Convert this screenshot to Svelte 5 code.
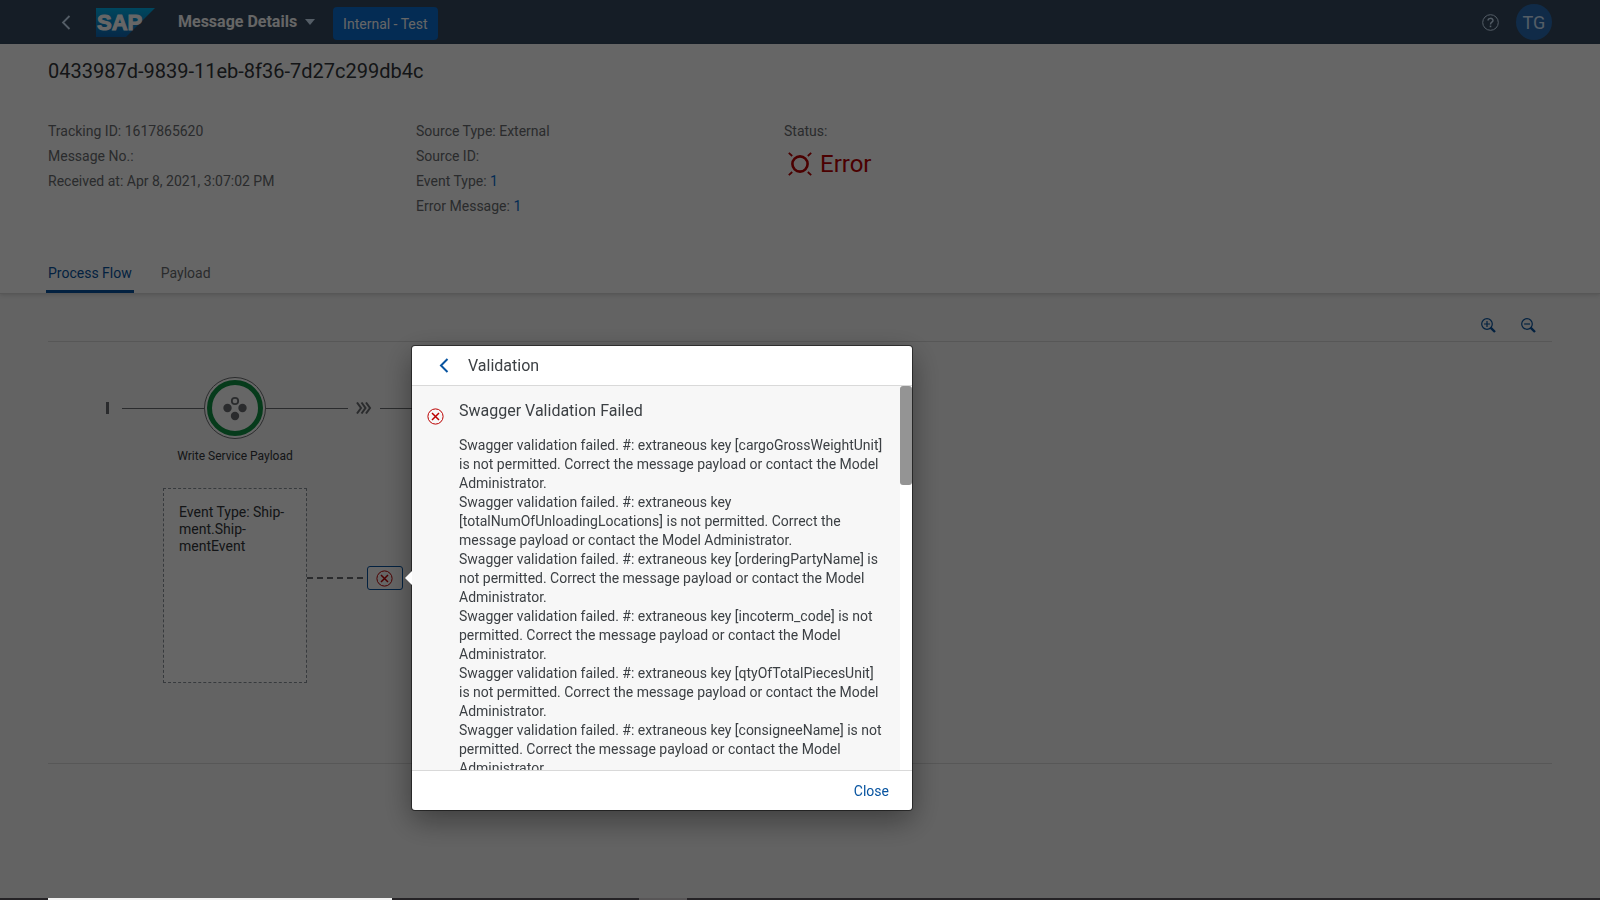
<script>
  const keys = [
    'cargoGrossWeightUnit',
    'totalNumOfUnloadingLocations',
    'orderingPartyName',
    'incoterm_code',
    'qtyOfTotalPiecesUnit',
    'consigneeName'
  ];
</script>

{#snippet errorIcon()}
  <svg class="error-icon" viewBox="0 0 17 17" width="17" height="17" aria-hidden="true">
    <circle cx="8.5" cy="8.5" r="7.6" fill="none" stroke="currentColor" stroke-width="1" />
    <path d="M5 5l7 7M12 5l-7 7" fill="none" stroke="currentColor" stroke-width="1.5" />
  </svg>
{/snippet}

<div class="page">
  <header class="shell">
    <button class="plain back" aria-label="Back">
      <svg viewBox="0 0 10 15" width="10" height="15"><path d="M8.5 1L2 7.5 8.5 14" fill="none" stroke="#d1e8ff" stroke-width="1.8" /></svg>
    </button>
    <svg class="logo" viewBox="0 0 59 29" width="59" height="29" role="img" aria-label="SAP">
      <defs>
        <linearGradient id="sap" x1="0" y1="0" x2="0" y2="1">
          <stop offset="0" stop-color="#00b1eb" />
          <stop offset="1" stop-color="#1065b3" />
        </linearGradient>
      </defs>
      <path d="M0 0H59L30 29H0z" fill="url(#sap)" />
      <text x="1" y="22" class="logo-text">SAP</text>
    </svg>
    <button class="plain app-title">
      Message Details
      <svg viewBox="0 0 10 6" width="10" height="6"><path d="M0 0h10L5 6z" fill="#d1e8ff" /></svg>
    </button>
    <button class="plain env">Internal - Test</button>
    <span class="spacer"></span>
    <button class="plain help" aria-label="Help">
      <svg viewBox="0 0 17 17" width="17" height="17" fill="none" stroke="#d1e8ff">
        <circle cx="8.5" cy="8.5" r="7.8" />
        <path d="M6 6.6C6 3.6 11 3.6 11 6.4 11 8.3 8.5 8.1 8.5 10.4" stroke-width="1.4" />
        <path d="M8.5 11.6v1.6" stroke-width="1.6" />
      </svg>
    </button>
    <button class="plain avatar">TG</button>
  </header>

  <section class="object">
    <h1>0433987d-9839-11eb-8f36-7d27c299db4c</h1>
    <div class="meta">
      <div>
        <p>Tracking ID: 1617865620</p>
        <p>Message No.:</p>
        <p>Received at: Apr 8, 2021, 3:07:02 PM</p>
      </div>
      <div>
        <p>Source Type: External</p>
        <p>Source ID:</p>
        <p>Event Type: <a href="#event">1</a></p>
        <p>Error Message: <a href="#error">1</a></p>
      </div>
      <div>
        <p>Status:</p>
        <div class="status">
          <svg viewBox="0 0 24 24" width="24" height="24" fill="none" stroke="currentColor">
            <circle cx="12" cy="12" r="7.6" stroke-width="2.6" />
            <path d="M.8 .8l3.4 3.2M23.2 .8l-3.4 3.2M.8 23.2l3.4-3.2M23.2 23.2l-3.4-3.2" stroke-width="1.8" />
          </svg>
          Error
        </div>
      </div>
    </div>
    <nav class="tabs">
      <button class="plain tab active">Process Flow</button>
      <button class="plain tab">Payload</button>
    </nav>
  </section>

  <main>
    <div class="toolbar">
      <button class="plain zoom" aria-label="Zoom in">
        <svg viewBox="0 0 15 15" width="15" height="15" fill="none" stroke="currentColor">
          <circle cx="6" cy="6" r="5.3" stroke-width="1.2" /><path d="M3 6h6M6 3v6" stroke-width="1.2" /><path d="M9.6 9.6l4.4 4.4" stroke-width="2.4" />
        </svg>
      </button>
      <button class="plain zoom" aria-label="Zoom out">
        <svg viewBox="0 0 15 15" width="15" height="15" fill="none" stroke="currentColor">
          <circle cx="6" cy="6" r="5.3" stroke-width="1.2" /><path d="M3 6h6" stroke-width="1.2" /><path d="M9.6 9.6l4.4 4.4" stroke-width="2.4" />
        </svg>
      </button>
    </div>

    <div class="canvas">
      <div class="lane">
        <span class="start"></span>
        <span class="line"></span>
        <svg class="node" viewBox="0 0 62 62" width="62" height="62" aria-hidden="true">
          <circle cx="31" cy="31" r="30.5" fill="#fff" stroke="#6a6d70" />
          <circle cx="31" cy="31" r="25.5" fill="#fff" stroke="#109445" stroke-width="5" />
          <circle cx="31" cy="24" r="3.2" fill="none" stroke="#6a6d70" stroke-width="1.8" />
          <g fill="#6a6d70"><circle cx="23.5" cy="31" r="4.2" /><circle cx="38.5" cy="31" r="4.2" /><circle cx="31" cy="39" r="4.2" /></g>
        </svg>
        <span class="line"></span>
        <svg class="chevrons" viewBox="0 0 16 12" width="16" height="12" fill="none" stroke="#6a6d70" stroke-width="2" aria-hidden="true">
          <path d="M1 .5L5 6 1 11.5M5.5 .5l4 5.5-4 5.5M10 .5L14 6l-4 5.5" />
        </svg>
        <span class="line"></span>
      </div>
      <p class="lane-label">Write Service Payload</p>
      <div class="branch">
        <div class="event">Event Type: Ship&shy;ment.Ship&shy;mentEvent</div>
        <div class="connector">
          <svg viewBox="0 0 60 2" width="60" height="2" aria-hidden="true"><path d="M0 1h60" stroke="#6a6d70" stroke-width="2" stroke-dasharray="6 4" /></svg>
          <button class="plain fault" aria-label="Show error">{@render errorIcon()}</button>
        </div>
      </div>
    </div>
  </main>
</div>

<div class="overlay"></div>

<div class="popover" role="dialog" aria-labelledby="pop-title">
  <span class="arrow"></span>
  <header>
    <button class="plain pop-back" aria-label="Back">
      <svg viewBox="0 0 10 15" width="10" height="15"><path d="M8.5 1L2 7.5 8.5 14" fill="none" stroke="#0854a0" stroke-width="2" /></svg>
    </button>
    <h2 id="pop-title">Validation</h2>
  </header>
  <div class="pop-main">
    <div class="pop-content">
      <div class="pop-icon">{@render errorIcon()}</div>
      <div class="pop-text">
        <h3>Swagger Validation Failed</h3>
        {#each keys as key}
          <p>Swagger validation failed. #: extraneous key [{key}] is not permitted. Correct the message payload or contact the Model Administrator.</p>
        {/each}
      </div>
    </div>
    <div class="track"><span class="thumb"></span></div>
  </div>
  <footer><button class="plain close">Close</button></footer>
</div>

<div class="taskbar"><span class="task open"></span><span class="task"></span></div>

<style>
  :global(body) {
    margin: 0;
    background: #f7f7f7;
    overflow: hidden;
  }
  .page, .popover {
    font-family: Roboto, "Liberation Sans", sans-serif;
    font-size: 14px;
    color: #32363a;
  }
  .page { min-height: 100vh; background: #f7f7f7; }
  .plain {
    border: 0;
    padding: 0;
    background: none;
    font: inherit;
    color: inherit;
    cursor: pointer;
  }
  h1, h2, h3, p { margin: 0; font-weight: 400; }
  svg { display: block; flex: none; }

  .shell {
    display: flex;
    align-items: center;
    height: 44px;
    padding: 0 48px 0 61px;
    background: #354a5f;
    color: #fff;
  }
  .logo { margin-left: 25px; }
  .logo-text {
    font: 700 22px "Liberation Sans", sans-serif;
    fill: #fff;
    stroke: #fff;
    stroke-width: 1px;
  }
  .app-title {
    display: flex;
    align-items: center;
    gap: 8px;
    margin-left: 23px;
    padding-bottom: 1px;
    font-size: 16px;
    font-weight: 700;
  }
  .env {
    height: 33px;
    margin: 3px 0 0 18px;
    padding: 0 10px;
    border-radius: 4px;
    background: #0a6ed1;
  }
  .spacer { flex: 1; }
  .avatar {
    width: 36px;
    height: 36px;
    margin-left: 17px;
    border-radius: 50%;
    background: #2a6cb4;
    color: #d1e8ff;
    font-size: 18px;
  }

  .object {
    position: relative;
    padding-top: 15px;
    background: #fff;
    box-shadow: 0 1px 0 #d9d9d9, 0 2px 4px rgba(0, 0, 0, 0.15);
  }
  h1 { margin: 0 48px; font-size: 20px; line-height: 24px; }
  .meta {
    display: flex;
    min-height: 130px;
    margin: 36px 48px 0;
    color: #6a6d70;
    line-height: 25px;
  }
  .meta > div { width: 368px; }
  .meta a { color: #0a6ed1; text-decoration: none; }
  .status {
    display: flex;
    align-items: center;
    gap: 8px;
    margin: 6px 0 0 4px;
    color: #bb0000;
    font-size: 24px;
    line-height: 28px;
  }
  .tabs { display: flex; gap: 25px; margin-left: 46px; }
  .tab {
    padding: 14px 2px 7px;
    border-bottom: 3px solid transparent;
    color: #6a6d70;
    line-height: 20px;
  }
  .tab.active { border-color: #0854a0; color: #0854a0; }

  main { margin: 0 48px; }
  .toolbar {
    display: flex;
    justify-content: flex-end;
    align-items: center;
    height: 48px;
    padding: 16px 4px 0;
    box-sizing: border-box;
    color: #0854a0;
  }
  .zoom { display: flex; justify-content: center; width: 40px; }
  .canvas {
    min-height: 423px;
    box-sizing: border-box;
    padding: 35px 0 0 58px;
    border-top: 1px solid #d9d9d9;
    border-bottom: 1px solid #d9d9d9;
  }
  .lane { display: flex; align-items: center; }
  .start { width: 3px; height: 12px; margin-right: 13px; background: #6a6d70; }
  .line { width: 82px; height: 1px; background: #6a6d70; }
  .chevrons { margin: 0 8px; }
  .lane-label {
    width: 258px;
    margin-top: 9px;
    box-sizing: border-box;
    text-align: center;
    font-size: 12px;
    line-height: 16px;
  }
  .branch { display: flex; align-items: flex-start; margin: 24px 0 0 57px; }
  .event {
    width: 144px;
    min-height: 195px;
    box-sizing: border-box;
    padding: 15px;
    border: 1px dashed #89919a;
    background: #fff;
    line-height: 17px;
    hyphens: manual;
  }
  .connector { display: flex; align-items: center; height: 24px; margin-top: 78px; }
  .fault {
    display: flex;
    align-items: center;
    justify-content: center;
    width: 36px;
    height: 24px;
    padding-right: 1px;
    border: 1px solid #0854a0;
    border-radius: 3px;
    background: #fff;
    color: #bb0000;
  }

  .overlay { position: fixed; inset: 0; background: rgba(0, 0, 0, 0.6); }

  .popover {
    position: fixed;
    left: 412px;
    top: 346px;
    width: 500px;
    border-radius: 3px;
    background: #fff;
    box-shadow: 0 0 0 1px rgba(0, 0, 0, 0.5), 0 10px 30px rgba(0, 0, 0, 0.4);
    color: #3c4044;
  }
  .arrow {
    position: absolute;
    left: -7px;
    top: 225px;
    border: 7px solid transparent;
    border-left: 0;
    border-right-color: #fff;
  }
  .popover header {
    display: flex;
    align-items: center;
    gap: 19px;
    height: 39px;
    padding-left: 27px;
    border-bottom: 1px solid #d9d9d9;
  }
  h2, h3 { font-size: 16px; }
  .pop-main { display: flex; height: 384px; background: #f7f7f7; }
  .pop-content {
    display: flex;
    flex: 1;
    gap: 15px;
    padding: 14px 16px 0 15px;
    overflow: hidden;
  }
  .pop-icon { padding-top: 8px; color: #bb0000; }
  .pop-text { flex: 1; line-height: 19px; }
  h3 { margin-bottom: 15px; line-height: 21px; }
  .track { width: 12px; background: #fff; }
  .thumb { display: block; height: 99px; border-radius: 3px; background: #949494; }
  .popover footer {
    display: flex;
    align-items: center;
    justify-content: flex-end;
    height: 39px;
    padding-right: 23px;
    border-top: 1px solid #d9d9d9;
    border-radius: 0 0 3px 3px;
  }
  .close { color: #0854a0; }

  .taskbar {
    position: fixed;
    inset: auto 0 0;
    display: flex;
    gap: 247px;
    height: 2px;
    padding-left: 48px;
    background: #252326;
  }
  .task { width: 48px; background: #575556; }
  .task.open { width: 344px; background: #f2f2f2; }
</style>
